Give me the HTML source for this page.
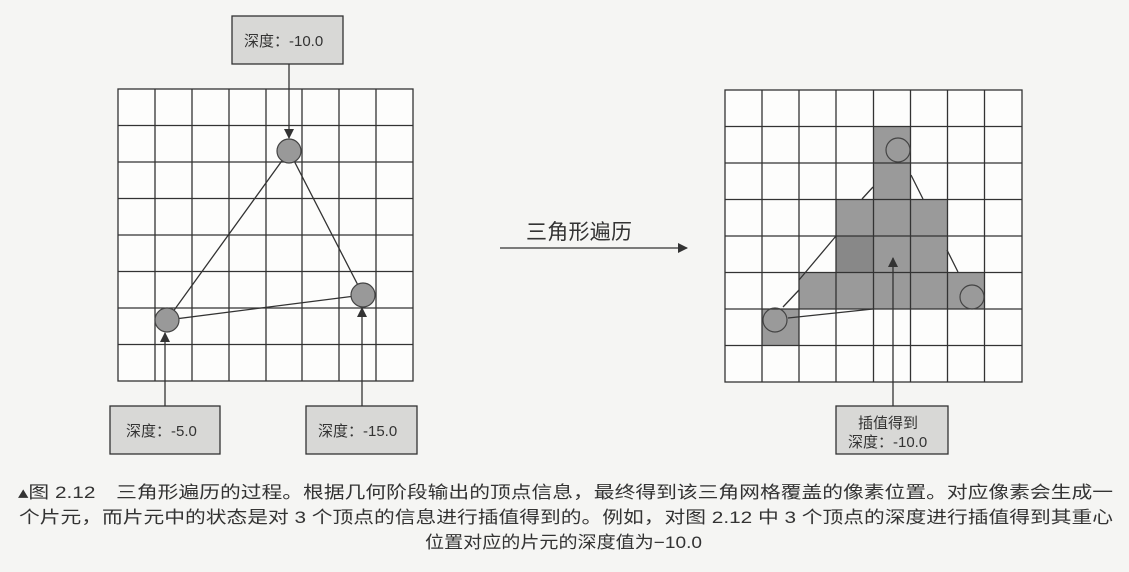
<!DOCTYPE html>
<html><head><meta charset="utf-8"><style>
html,body{margin:0;padding:0;background:#f5f5f3;}
svg{display:block}
text{font-family:"Liberation Sans","Noto Sans CJK SC",sans-serif;fill:#333}
</style></head><body>
<svg width="1129" height="572" viewBox="0 0 1129 572" xmlns="http://www.w3.org/2000/svg">
<defs>
<marker id="ah" markerWidth="10" markerHeight="10" refX="9" refY="5" orient="auto" markerUnits="userSpaceOnUse">
<path d="M0,0 L10,5 L0,10 z" fill="#333"/></marker>
</defs>
<!-- left grid -->
<g stroke="#333" stroke-width="1.3" fill="none">
<rect x="118" y="89" width="295" height="292" fill="#fdfdfc"/>
<path d="M155,89V381M192,89V381M229,89V381M266,89V381M302,89V381M339,89V381M376,89V381
M118,125.5H413M118,162H413M118,198.5H413M118,235H413M118,271.5H413M118,308H413M118,344.5H413"/>
<path d="M289,151L167,320L363,295Z"/>
<line x1="289" y1="64" x2="289" y2="138" marker-end="url(#ah)"/>
<line x1="165" y1="406" x2="165" y2="333" marker-end="url(#ah)"/>
<line x1="362" y1="406" x2="362" y2="308" marker-end="url(#ah)"/>
</g>
<g fill="#999" stroke="#444" stroke-width="1.2">
<circle cx="289" cy="151" r="12"/><circle cx="167" cy="320" r="12"/><circle cx="363" cy="295" r="12"/>
</g>
<!-- boxes -->
<g fill="#d8d8d6" stroke="#333" stroke-width="1.3">
<rect x="232" y="16" width="111" height="48"/>
<rect x="110" y="406" width="110" height="48"/>
<rect x="306" y="406" width="111" height="48"/>
<rect x="836" y="406" width="112" height="48"/>
</g>
<g font-size="15">
<text x="244" y="46">深度：-10.0</text>
<text x="126" y="436">深度：-5.0</text>
<text x="318" y="436">深度：-15.0</text>
<text x="858" y="428">插值得到</text>
<text x="848" y="447">深度：-10.0</text>
</g>
<!-- middle -->
<text x="526" y="239" font-size="21" textLength="106">三角形遍历</text>
<line x1="500" y1="248" x2="687" y2="248" stroke="#333" stroke-width="1.3" marker-end="url(#ah)"/>
<!-- right grid -->
<rect x="725" y="90" width="297" height="292" fill="#fdfdfc"/>
<g fill="#9a9a9a">
<rect x="873.5" y="126.5" width="37" height="73"/>
<rect x="836.5" y="199.5" width="111" height="73"/>
<rect x="799.5" y="272.5" width="185" height="36.5"/>
<rect x="762.5" y="309" width="37" height="36.5"/>
</g>
<rect x="836.5" y="236" width="37" height="36.5" fill="#888"/>
<g stroke="#333" stroke-width="1.3" fill="none">
<rect x="725" y="90" width="297" height="292"/>
<path d="M762,90V382M799,90V382M836,90V382M873.5,90V382M910.5,90V382M947.5,90V382M984.5,90V382
M725,126.5H1022M725,163H1022M725,199.5H1022M725,236H1022M725,272.5H1022M725,309H1022M725,345.5H1022"/>
<path d="M873,187L862,199M911,175L923,199M836,236L799,280M947,250L958,272M799,290L783,307M788,318L873,309"/>
<line x1="893" y1="406" x2="893" y2="258" marker-end="url(#ah)"/>
</g>
<g fill="none" stroke="#444" stroke-width="1.2">
<circle cx="898" cy="150" r="12"/><circle cx="972" cy="297" r="12"/><circle cx="775" cy="320" r="12"/>
</g>
<!-- caption -->
<g font-size="17">
<text x="18" y="498" textLength="1095" lengthAdjust="spacingAndGlyphs">▴图 2.12　三角形遍历的过程。根据几何阶段输出的顶点信息，最终得到该三角网格覆盖的像素位置。对应像素会生成一</text>
<text x="19" y="523" textLength="1094" lengthAdjust="spacingAndGlyphs">个片元，而片元中的状态是对 3 个顶点的信息进行插值得到的。例如，对图 2.12 中 3 个顶点的深度进行插值得到其重心</text>
<text x="425" y="548" textLength="277" lengthAdjust="spacingAndGlyphs">位置对应的片元的深度值为−10.0</text>
</g>
</svg>
</body></html>
